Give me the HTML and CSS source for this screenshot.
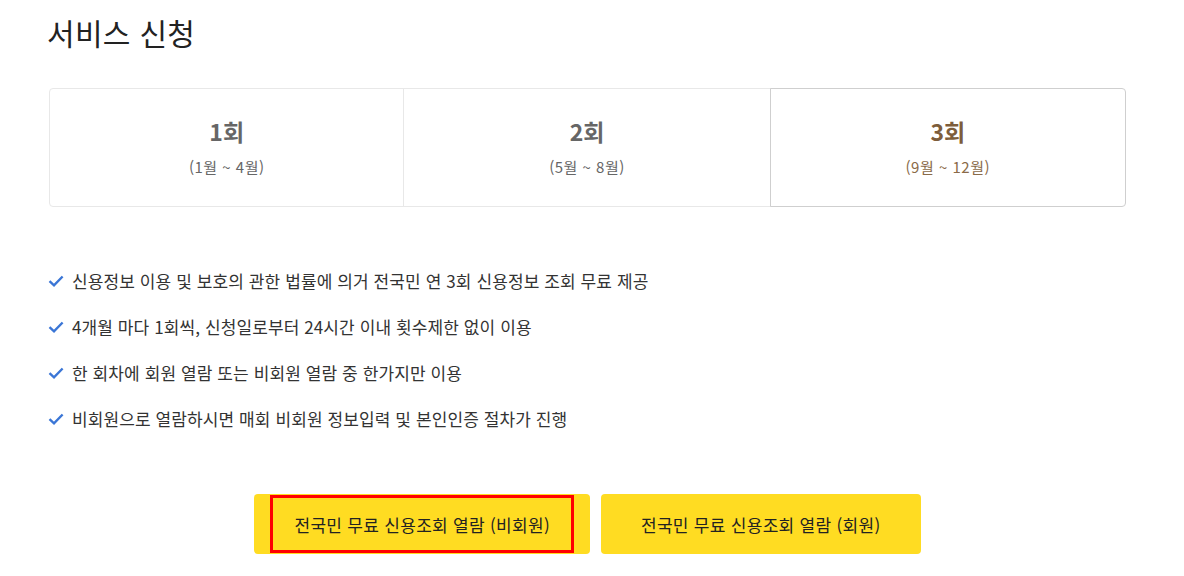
FILE: index.html
```html
<!DOCTYPE html>
<html lang="ko">
<head>
  <meta charset="UTF-8">
  <meta name="viewport" content="width=device-width, initial-scale=1.0">
  <title>서비스 신청</title>
  <link rel="stylesheet" href="styles.css">
</head>
<body>

  <div class="container">
    <h1 class="page-title">서비스 신청</h1>

    <!-- 회차 선택 -->
    <div class="round-tabs">
      <div class="round-tab">
        <strong class="round-name">1회</strong>
        <span class="round-period">(1월 ~ 4월)</span>
      </div>
      <div class="round-tab">
        <strong class="round-name">2회</strong>
        <span class="round-period">(5월 ~ 8월)</span>
      </div>
      <div class="round-tab active">
        <strong class="round-name">3회</strong>
        <span class="round-period">(9월 ~ 12월)</span>
      </div>
    </div>

    <!-- 안내 문구 -->
    <ul class="notice-list">
      <li>
        <svg class="check" viewBox="0 0 16 12" width="16" height="12"><path d="M1.5 6.2 L6 10.3 L14.6 1.5" fill="none" stroke="#3b76d6" stroke-width="2.4"/></svg>
        신용정보 이용 및 보호의 관한 법률에 의거 전국민 연 3회 신용정보 조회 무료 제공
      </li>
      <li>
        <svg class="check" viewBox="0 0 16 12" width="16" height="12"><path d="M1.5 6.2 L6 10.3 L14.6 1.5" fill="none" stroke="#3b76d6" stroke-width="2.4"/></svg>
        4개월 마다 1회씩, 신청일로부터 24시간 이내 횟수제한 없이 이용
      </li>
      <li>
        <svg class="check" viewBox="0 0 16 12" width="16" height="12"><path d="M1.5 6.2 L6 10.3 L14.6 1.5" fill="none" stroke="#3b76d6" stroke-width="2.4"/></svg>
        한 회차에 회원 열람 또는 비회원 열람 중 한가지만 이용
      </li>
      <li>
        <svg class="check" viewBox="0 0 16 12" width="16" height="12"><path d="M1.5 6.2 L6 10.3 L14.6 1.5" fill="none" stroke="#3b76d6" stroke-width="2.4"/></svg>
        비회원으로 열람하시면 매회 비회원 정보입력 및 본인인증 절차가 진행
      </li>
    </ul>

    <!-- 열람 버튼 -->
    <div class="btn-area">
      <a href="#" class="btn focused"><span class="btn-label">전국민 무료 신용조회 열람 (비회원)</span></a>
      <a href="#" class="btn"><span class="btn-label">전국민 무료 신용조회 열람 (회원)</span></a>
    </div>
  </div>

</body>
</html>
```

FILE: styles.css
```css
/* Base */
body {
  margin: 0;
  font-family: "Noto Sans CJK KR", "Noto Sans", sans-serif;
  color: #333;
  background: #fff;
}

.container {
  width: 1077px;
  padding-left: 49px;
}

.page-title {
  margin: 12px 0 36px -2px;
  font-size: 30px;
  line-height: 40px;
  font-weight: 400;
  letter-spacing: 0.3px;
  color: #222;
}

/* Round tabs */
.round-tabs {
  display: grid;
  grid-template-columns: 33% 34% 33%;
}

.round-tab {
  display: flex;
  flex-direction: column;
  align-items: center;
  padding: 27px 0 29px;
  border: 1px solid #e8e8e8;
  margin-left: -1px;
  color: #666;
}

.round-tab:first-child {
  margin-left: 0;
  border-radius: 4px 0 0 4px;
}

.round-tab:last-child {
  border-radius: 0 4px 4px 0;
}

.round-tab.active {
  border-color: #cfcfcf;
  color: #7d5d3b;
  position: relative;
}

.round-name {
  font-size: 23px;
  line-height: 30px;
  font-weight: 700;
}

.round-period {
  margin-top: 11px;
  font-size: 15px;
  line-height: 20px;
  letter-spacing: 0.5px;
}

.round-tab.active .round-period {
  color: #8a6a48;
}

/* Notice list */
.notice-list {
  list-style: none;
  margin: 61px 0 0 -1px;
  padding: 0;
  display: flex;
  flex-direction: column;
  gap: 20px;
}

.notice-list li {
  display: flex;
  align-items: center;
  gap: 8px;
  font-size: 17px;
  line-height: 26px;
  letter-spacing: 0.1px;
  color: #333;
}

.check {
  flex: none;
}

/* Buttons */
.btn-area {
  display: flex;
  justify-content: center;
  gap: 11px;
  margin-top: 62px;
}

.btn {
  display: flex;
  align-items: center;
  height: 60px;
  padding: 0 16px;
  box-sizing: border-box;
  background: #ffdc22;
  border-radius: 4px;
  color: #222;
  font-size: 17px;
  letter-spacing: 0.3px;
  text-decoration: none;
}

.btn-label {
  display: flex;
  align-items: center;
  height: 58px;
  padding: 0 21px;
  box-sizing: border-box;
  border: 3px solid transparent;
}

.btn.focused .btn-label {
  border-color: #f00;
}
```
